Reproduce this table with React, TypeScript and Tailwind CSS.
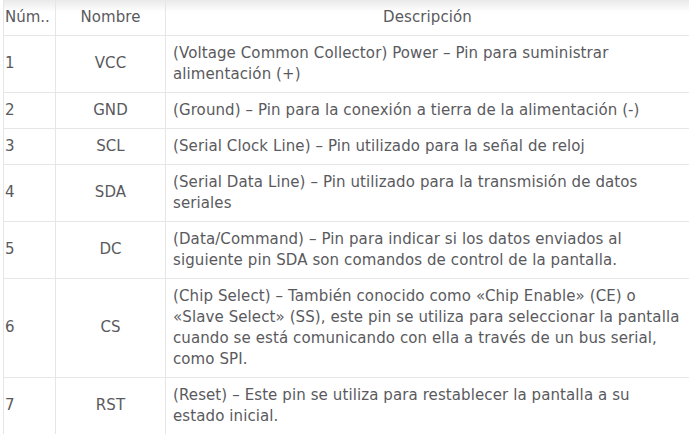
import React from "react";

const rows: { n: string; name: string; lines: string[] }[] = [
  { n: "1", name: "VCC", lines: ["(Voltage Common Collector) Power – Pin para suministrar", "alimentación (+)"] },
  { n: "2", name: "GND", lines: ["(Ground) – Pin para la conexión a tierra de la alimentación (-)"] },
  { n: "3", name: "SCL", lines: ["(Serial Clock Line) – Pin utilizado para la señal de reloj"] },
  { n: "4", name: "SDA", lines: ["(Serial Data Line) – Pin utilizado para la transmisión de datos", "seriales"] },
  { n: "5", name: "DC", lines: ["(Data/Command) – Pin para indicar si los datos enviados al", "siguiente pin SDA son comandos de control de la pantalla."] },
  {
    n: "6",
    name: "CS",
    lines: [
      "(Chip Select) – También conocido como «Chip Enable» (CE) o",
      "«Slave Select» (SS), este pin se utiliza para seleccionar la pantalla",
      "cuando se está comunicando con ella a través de un bus serial,",
      "como SPI.",
    ],
  },
  { n: "7", name: "RST", lines: ["(Reset) – Este pin se utiliza para restablecer la pantalla a su", "estado inicial."] },
];

export default function App() {
  return (
    <div
      className="w-[689px] h-[434px] bg-white overflow-hidden pl-[3px] text-[15px] leading-[21px] tracking-[0.1px] text-[#5a5a5e]"
      style={{ fontFamily: '"DejaVu Sans", "Noto Sans", sans-serif' }}
    >
      <table className="w-[686px] border-collapse table-fixed">
        <colgroup>
          <col className="w-[52px]" />
          <col className="w-[110px]" />
          <col className="w-[524px]" />
        </colgroup>
        <thead>
          <tr className="bg-[linear-gradient(to_bottom,#e9e9e9,#ffffff_12px)]">
            <th className="border-x border-b border-[#e6e6e6] h-[35px] pl-[1px] text-left font-normal whitespace-nowrap overflow-hidden tracking-normal">
              Núm..
            </th>
            <th className="border-x border-b border-[#e6e6e6] text-center font-normal">Nombre</th>
            <th className="border-x border-b border-[#e6e6e6] text-center font-normal">Descripción</th>
          </tr>
        </thead>
        <tbody>
          {rows.map((r) => (
            <tr key={r.n}>
              <td className="border border-[#e6e6e6] pl-[1px] py-[7px] align-middle">{r.n}</td>
              <td className="border border-[#e6e6e6] text-center py-[7px] align-middle">{r.name}</td>
              <td className="border border-[#e6e6e6] pl-[7px] py-[7px] align-middle whitespace-nowrap">
                {r.lines.map((l, i) => (
                  <div key={i}>{l}</div>
                ))}
              </td>
            </tr>
          ))}
        </tbody>
      </table>
    </div>
  );
}
